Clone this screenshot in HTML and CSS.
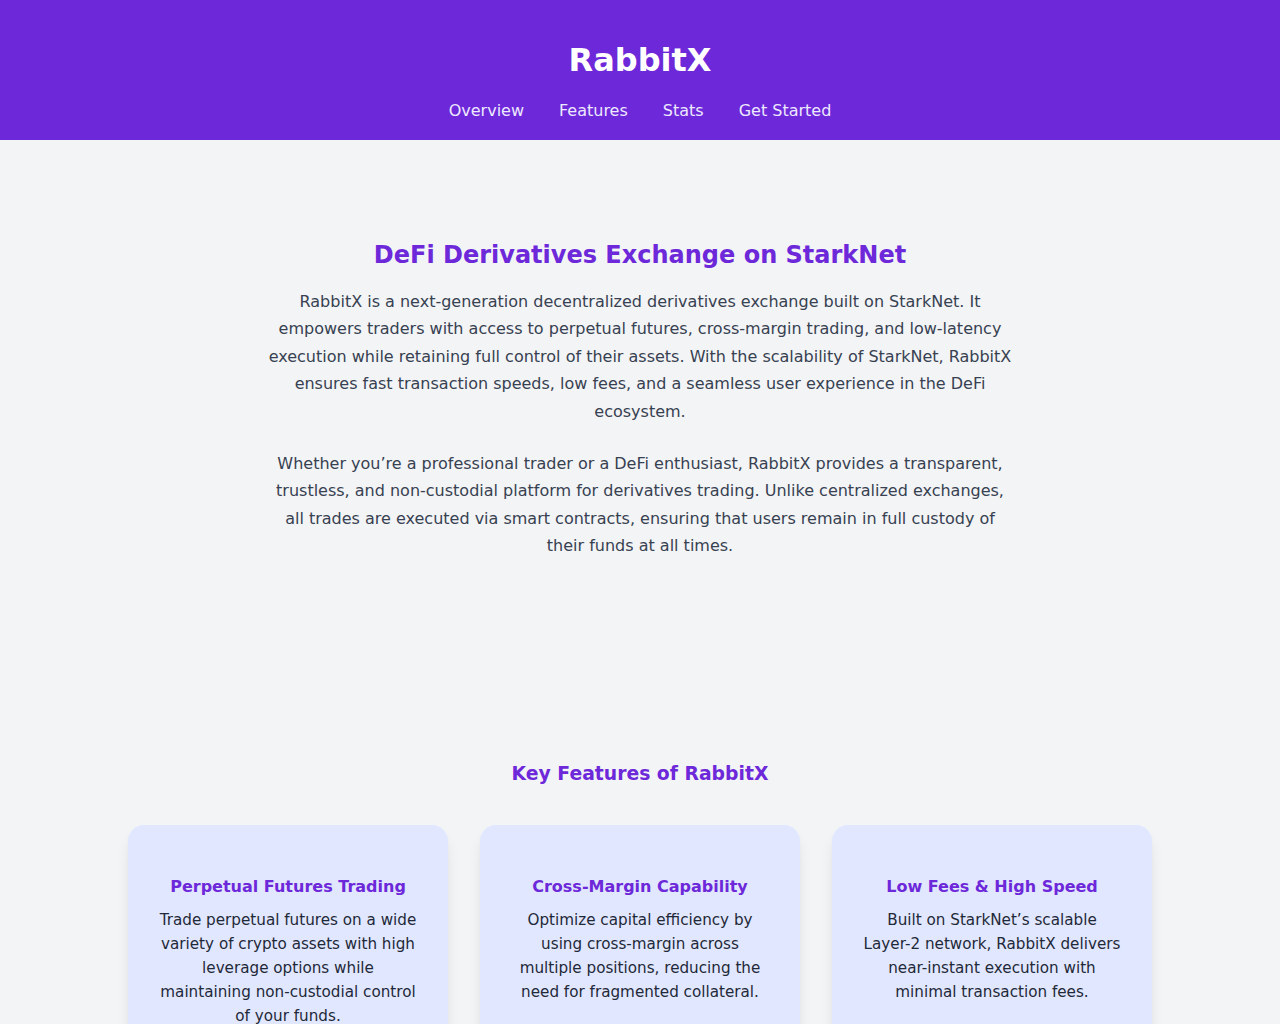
FILE: index.html
```html
<!DOCTYPE html>
<html lang="en">
<head>
<meta charset="utf-8">
<title>RabbitX</title>
<link rel="stylesheet" href="styles.css">
</head>
<body>
<header class="site-header">
  <h1 class="brand">RabbitX</h1>
  <nav class="nav">
    <a href="#overview">Overview</a>
    <a href="#features">Features</a>
    <a href="#stats">Stats</a>
    <a href="#get-started">Get Started</a>
  </nav>
</header>
<main>
  <section class="overview" id="overview">
    <h2 class="section-title">DeFi Derivatives Exchange on StarkNet</h2>
    <p class="lead">RabbitX is a next-generation decentralized derivatives exchange built on StarkNet. It empowers traders with access to perpetual futures, cross-margin trading, and low-latency execution while retaining full control of their assets. With the scalability of StarkNet, RabbitX ensures fast transaction speeds, low fees, and a seamless user experience in the DeFi ecosystem.</p>
    <p class="lead">Whether you’re a professional trader or a DeFi enthusiast, RabbitX provides a transparent, trustless, and non-custodial platform for derivatives trading. Unlike centralized exchanges, all trades are executed via smart contracts, ensuring that users remain in full custody of their funds at all times.</p>
  </section>
  <section class="features" id="features">
    <h2 class="features-title">Key Features of RabbitX</h2>
    <div class="card-grid">
      <div class="card">
        <h3 class="card-title">Perpetual Futures Trading</h3>
        <p class="card-text">Trade perpetual futures on a wide variety of crypto assets with high leverage options while maintaining non-custodial control of your funds.</p>
      </div>
      <div class="card">
        <h3 class="card-title">Cross-Margin Capability</h3>
        <p class="card-text">Optimize capital efficiency by using cross-margin across multiple positions, reducing the need for fragmented collateral.</p>
      </div>
      <div class="card">
        <h3 class="card-title">Low Fees &amp; High Speed</h3>
        <p class="card-text">Built on StarkNet’s scalable Layer-2 network, RabbitX delivers near-instant execution with minimal transaction fees.</p>
      </div>
    </div>
  </section>
</main>
</body>
</html>
```

FILE: styles.css
```css
* { box-sizing: border-box; }

html, body {
  margin: 0;
  padding: 0;
}

body {
  font-family: "DejaVu Sans", sans-serif;
  background: #f3f4f6;
  color: #374151;
}

.site-header {
  background: #6d28d9;
  color: #ffffff;
  text-align: center;
  padding: 42px 0 17px;
}

.brand {
  margin: 0;
  font-size: 32px;
  line-height: 37px;
  font-weight: 700;
}

.nav {
  margin-top: 20px;
  display: flex;
  justify-content: center;
  gap: 35px;
  line-height: 24px;
  font-size: 16px;
}

.nav a {
  color: #ede9fe;
  text-decoration: none;
}

.overview {
  max-width: 744px;
  margin: 0 auto;
  padding: 97px 0 0;
  text-align: center;
}

.section-title {
  margin: 0 0 15px;
  font-size: 24px;
  line-height: 36px;
  font-weight: 700;
  color: #6d28d9;
}

.lead {
  margin: 0 0 25px;
  font-size: 16px;
  line-height: 27.4px;
  color: #374151;
}

.lead:last-child { margin-bottom: 0; }

.features {
  max-width: 1024px;
  margin: 0 auto;
  padding: 200px 0 40px;
  text-align: center;
}

.features-title {
  margin: 0 0 37px;
  font-size: 18.8px;
  line-height: 28px;
  font-weight: 700;
  color: #6d28d9;
}

.card-grid {
  display: grid;
  grid-template-columns: repeat(3, 1fr);
  gap: 32px;
}

.card {
  background: #e0e7ff;
  border-radius: 16px;
  padding: 48px 30px 32px;
  box-shadow: 0 10px 15px -3px rgba(0,0,0,0.1), 0 4px 6px -4px rgba(0,0,0,0.1);
}

.card-title {
  margin: 0 0 7px;
  font-size: 16px;
  line-height: 28px;
  font-weight: 700;
  color: #6d28d9;
}

.card-text {
  margin: 0;
  font-size: 15.2px;
  line-height: 24.2px;
  color: #1f2937;
}
```
